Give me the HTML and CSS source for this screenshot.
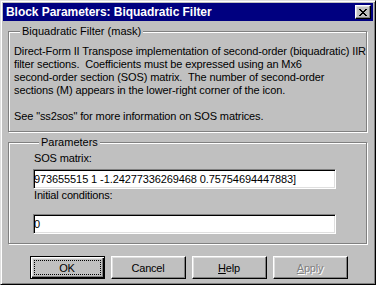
FILE: index.html
```html
<!DOCTYPE html>
<html lang="en">
<head>
    <meta charset="UTF-8">
    <title>Block Parameters: Biquadratic Filter</title>
    <link rel="stylesheet" href="styles.css">
</head>
<body>
    <div class="window">
        <!-- Title Bar -->
        <div class="titlebar">
            <span class="title">Block Parameters: Biquadratic Filter</span>
            <button class="close-btn" aria-label="Close">
                <svg width="8" height="7" viewBox="0 0 8 7" shape-rendering="crispEdges">
                    <path fill="#000" d="M0 0h2v1H0z M6 0h2v1H6z M1 1h2v1H1z M5 1h2v1H5z M2 2h4v1H2z M3 3h2v1H3z M2 4h4v1H2z M1 5h2v1H1z M5 5h2v1H5z M0 6h2v1H0z M6 6h2v1H6z"/>
                </svg>
            </button>
        </div>

        <!-- Mask Description -->
        <fieldset class="group group-mask">
            <legend>Biquadratic Filter (mask)</legend>
            <p class="description">Direct-Form II Transpose implementation of second-order (biquadratic) IIR<br>filter sections.&nbsp; Coefficients must be expressed using an Mx6<br>second-order section (SOS) matrix.&nbsp; The number of second-order<br>sections (M) appears in the lower-right corner of the icon.<br><br>See &quot;ss2sos&quot; for more information on SOS matrices.</p>
        </fieldset>

        <!-- Parameters -->
        <fieldset class="group group-params">
            <legend>Parameters</legend>
            <label class="field-label" for="sos">SOS matrix:</label>
            <input class="field" id="sos" type="text" value="973655515 1 -1.24277336269468 0.75754694447883]">
            <label class="field-label label-ic" for="ic">Initial conditions:</label>
            <input class="field field-ic" id="ic" type="text" value="0">
        </fieldset>

        <!-- Dialog Buttons -->
        <div class="buttons">
            <button class="btn btn-default"><span class="focus">OK</span></button>
            <button class="btn">Cancel</button>
            <button class="btn"><u>H</u>elp</button>
            <button class="btn btn-disabled" disabled><u>A</u>pply</button>
        </div>
    </div>
</body>
</html>
```

FILE: styles.css
```css
/* General Styling */
body {
    margin: 0;
    font-family: 'Liberation Sans', Arial, sans-serif;
    font-size: 11px;
    color: #000;
    background: #c0c0c0;
}

.window {
    width: 376px;
    height: 285px;
    box-sizing: border-box;
    background: #c0c0c0;
    border: 1px solid;
    border-color: #dfdfdf #000 #000 #dfdfdf;
    box-shadow: inset 1px 1px #fff, inset -1px -1px #808080;
    padding: 2px;
    display: flex;
    flex-direction: column;
}

/* Title Bar */
.titlebar {
    height: 18px;
    flex-shrink: 0;
    background: #000080;
    display: flex;
    align-items: center;
    justify-content: space-between;
    padding: 0 2px 0 3px;
}

.title {
    color: #fff;
    font-weight: bold;
    font-size: 12px;
    letter-spacing: -0.05px;
    line-height: 18px;
    white-space: nowrap;
}

.close-btn {
    width: 16px;
    height: 14px;
    padding: 0 1px 0 0;
    margin: 0;
    background: #c0c0c0;
    border: 1px solid;
    border-color: #fff #000 #000 #fff;
    box-shadow: inset -1px -1px #808080, inset 1px 1px #dfdfdf;
    display: flex;
    align-items: center;
    justify-content: center;
}

.close-btn svg {
    display: block;
}

/* Group Boxes */
.group {
    margin: 0 6px 0 5px;
    padding: 0 0 0 5px;
    min-inline-size: 0;
    border: 1px solid #808080;
    box-shadow: inset 1px 1px #fff, 1px 1px #fff;
}

.group legend {
    margin-left: 6px;
    padding: 0 2px;
    line-height: 13px;
    background: #c0c0c0;
}

.group-mask {
    margin-top: 4px;
    padding-top: 7px;
    padding-bottom: 8px;
}

.group-params {
    margin-top: 4px;
    padding: 3px 0 9px 24px;
}

.description {
    margin: 0;
    line-height: 13px;
    letter-spacing: -0.12px;
    white-space: nowrap;
}

.field-label {
    display: block;
    padding-left: 1px;
    line-height: 13px;
    letter-spacing: -0.15px;
}

.field {
    display: block;
    box-sizing: border-box;
    width: 303px;
    height: 20px;
    margin: 4px 0 0;
    padding: 0 0 1px;
    font-family: inherit;
    font-size: 11px;
    letter-spacing: -0.1px;
    color: #000;
    background: #fff;
    border: 1px solid;
    border-color: #808080 #fff #fff #808080;
    box-shadow: inset 1px 1px #000, inset -1px -1px #dfdfdf;
    outline: none;
}

.field-ic {
    margin-top: 12px;
}

/* Dialog Buttons */
.buttons {
    display: flex;
    justify-content: center;
    gap: 6px;
    margin-top: 12px;
    padding-left: 1px;
}

.btn {
    width: 75px;
    height: 23px;
    box-sizing: border-box;
    padding: 0;
    font-family: inherit;
    font-size: 11px;
    letter-spacing: -0.2px;
    color: #000;
    background: #c0c0c0;
    border: 1px solid;
    border-color: #fff #000 #000 #fff;
    box-shadow: inset -1px -1px #808080, inset 1px 1px #dfdfdf;
}

.btn-default {
    border-color: #000;
    box-shadow: inset 1px 1px #fff, inset -1px -1px #000, inset -2px -2px #808080, inset 2px 2px #dfdfdf;
    padding: 3px;
}

.btn-default .focus {
    display: flex;
    align-items: center;
    justify-content: center;
    height: 100%;
    box-sizing: border-box;
    border: 1px dotted #000;
}

.btn-disabled {
    color: #808080;
    text-shadow: 1px 1px #fff;
}
```
